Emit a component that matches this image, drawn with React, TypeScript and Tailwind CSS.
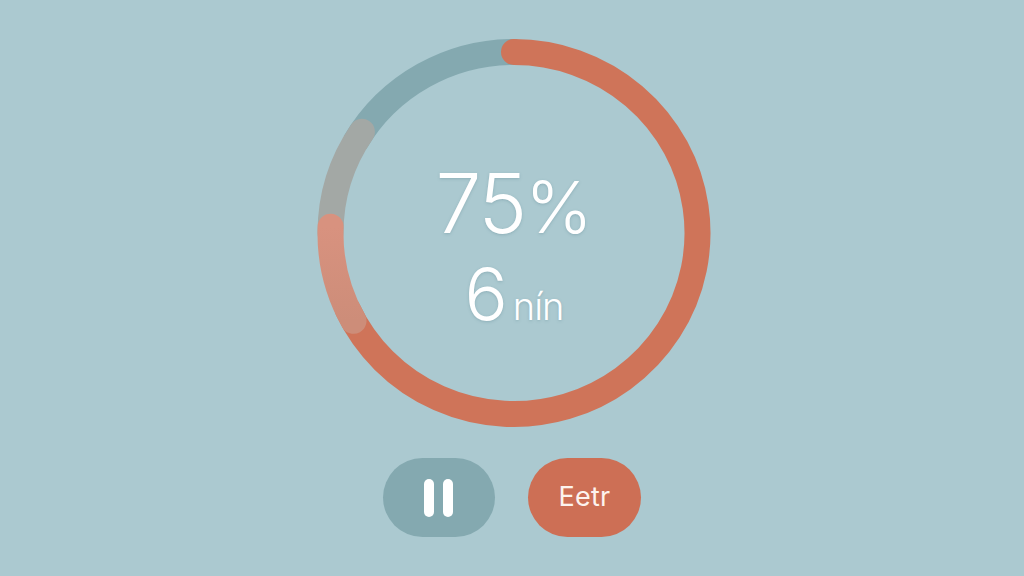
const font = { fontFamily: 'Inter, sans-serif' }

// angle in degrees, clockwise from the top of the ring
function pt(deg: number) {
  const a = (deg * Math.PI) / 180
  return `${(514 + 183.5 * Math.sin(a)).toFixed(1)} ${(233 - 181 * Math.cos(a)).toFixed(1)}`
}

function arc(from: number, to: number) {
  const large = to - from > 180 ? 1 : 0
  return `M${pt(from)} A183.5 181 0 ${large} 1 ${pt(to)}`
}

function Ring() {
  return (
    <svg width="396" height="390" viewBox="316 38 396 390" className="[grid-area:1/1]">
      <defs>
        <linearGradient id="pink" x1="0" y1="0" x2="0" y2="1">
          <stop offset="0" stopColor="#d8927f" />
          <stop offset="1" stopColor="#cd8d79" />
        </linearGradient>
      </defs>
      <path d={arc(300, 361)} fill="none" stroke="#84a9b0" strokeWidth="26" />
      <path d={arc(0, 245)} fill="none" stroke="#cf7459" strokeWidth="26" strokeLinecap="round" />
      <path d={arc(270, 304)} fill="none" stroke="#a3a8a5" strokeWidth="26" strokeLinecap="round" />
      <path d={arc(241, 272)} fill="none" stroke="url(#pink)" strokeWidth="26" strokeLinecap="round" />
    </svg>
  )
}

export default function App() {
  return (
    <div className="w-[1024px] h-[576px] bg-[#abc9d0] overflow-hidden flex flex-col items-center pt-[38px]" style={font}>
      <div className="grid ml-[4px]">
        <Ring />
        <div className="[grid-area:1/1] flex flex-col items-center justify-center text-white pt-[26px] [text-shadow:0_1px_3px_rgba(90,130,140,0.35)]">
          <div className="flex items-baseline font-light leading-[82px]">
            <span className="text-[82px] tracking-[-2px]">75</span>
            <span className="text-[72px]">%</span>
          </div>
          <div className="flex items-baseline mt-[10px] font-light">
            <span className="text-[72px] leading-[72px]">6</span>
            <span className="text-[38px] leading-[38px] ml-[5px] tracking-[-1px]">nín</span>
          </div>
        </div>
      </div>
      <div className="flex gap-[33px] mt-[30px]">
        <button className="w-[112px] h-[79px] rounded-[40px] bg-[#84a9b0] flex items-center justify-center gap-[9px] pr-[2px]">
          <span className="w-[10px] h-[38px] rounded-[5px] bg-white" />
          <span className="w-[10px] h-[38px] rounded-[5px] bg-white" />
        </button>
        <button className="w-[113px] h-[79px] rounded-[40px] bg-[#cd6f55] flex items-center justify-center text-[27px] tracking-[0.3px] text-[#fdf3ee]">
          Eetr
        </button>
      </div>
    </div>
  )
}
